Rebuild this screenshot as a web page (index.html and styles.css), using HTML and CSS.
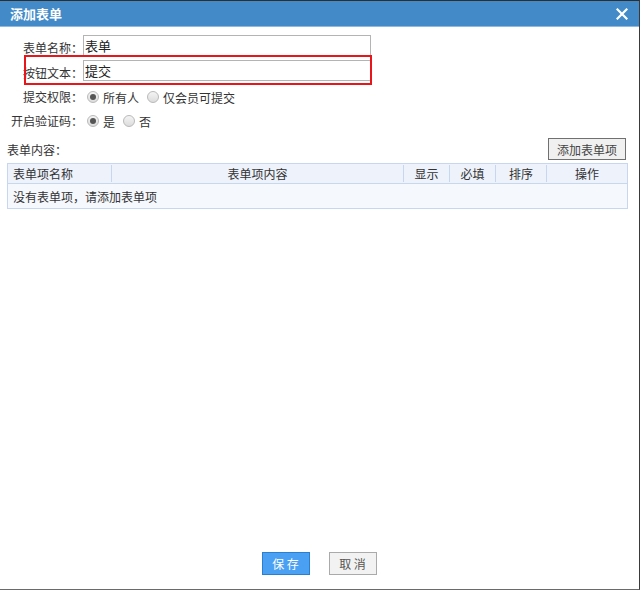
FILE: index.html
```html
<!DOCTYPE html>
<html lang="zh-CN">
<head>
<meta charset="utf-8">
<title>添加表单</title>
<link rel="stylesheet" href="styles.css">
</head>
<body>
<div class="dialog">
  <div class="titlebar">
    <span class="title">添加表单</span>
    <svg class="close" width="12" height="12" viewBox="0 0 12 12"><path d="M1.5 1.5 L10.5 10.5 M10.5 1.5 L1.5 10.5" stroke="#fff" stroke-width="2.2" stroke-linecap="square"/></svg>
  </div>
  <div class="body">
    <div class="form">
      <div class="row r1">
        <label class="lbl">表单名称<span class="colon">：</span></label>
        <input class="txt" type="text" value="表单">
      </div>
      <div class="row r2">
        <label class="lbl">按钮文本<span class="colon">：</span></label>
        <input class="txt" type="text" value="提交">
      </div>
      <div class="row r3">
        <label class="lbl">提交权限<span class="colon">：</span></label>
        <span class="radio on"></span><span class="opt">所有人</span>
        <span class="radio"></span><span class="opt">仅会员可提交</span>
      </div>
      <div class="row r4">
        <label class="lbl">开启验证码<span class="colon">：</span></label>
        <span class="radio on"></span><span class="opt">是</span>
        <span class="radio"></span><span class="opt">否</span>
      </div>
      <div class="highlight"></div>
    </div>
    <div class="section-head">
      <span class="section-title">表单内容<span class="colon">：</span></span>
      <button class="btn-add">添加表单项</button>
    </div>
    <div class="table">
      <div class="thead">
        <div class="c c-name">表单项名称</div>
        <div class="c c-content">表单项内容</div>
        <div class="c c-show">显示</div>
        <div class="c c-req">必填</div>
        <div class="c c-sort">排序</div>
        <div class="c c-op">操作</div>
      </div>
      <div class="empty">没有表单项<span class="colon">，</span>请添加表单项</div>
    </div>
    <div class="spacer"></div>
    <div class="footer">
      <button class="btn btn-save">保 存</button>
      <button class="btn btn-cancel">取 消</button>
    </div>
  </div>
</div>
</body>
</html>
```
FILE: styles.css
```css
* { box-sizing: border-box; }
html, body { margin: 0; padding: 0; background: #fff; }
body {
  font-family: "Noto Sans CJK SC", "Noto Sans", sans-serif;
  font-size: 12px;
  color: #333;
}
.colon { font-family: "Noto Sans CJK JP", "Noto Sans CJK SC", sans-serif; }
.dialog {
  width: 640px;
  height: 590px;
  border-top: 1px solid #2e2e2e;
  border-right: 1px solid #3a3a3a;
  border-bottom: 1px solid #6a6a6a;
  display: flex;
  flex-direction: column;
  background: #fff;
}
.titlebar {
  height: 26px;
  background: #428ac8;
  border-bottom: 1px solid #8fb9e0;
  display: flex;
  align-items: center;
  justify-content: space-between;
  padding: 0 11px 0 10px;
  flex-shrink: 0;
}
.title {
  color: #fff;
  font-weight: bold;
  font-size: 13px;
  line-height: 1;
}
.close { display: block; }
.body {
  flex: 1;
  display: flex;
  flex-direction: column;
  padding: 8px 12px 14px 7px;
}
.form {
  position: relative;
}
.row {
  display: flex;
  align-items: center;
}
.r1, .r2 { height: 25px; }
.r3, .r4 { height: 24px; }
.lbl {
  width: 76px;
  text-align: right;
  flex-shrink: 0;
  color: #333;
  line-height: 16px;
}
.r3 .lbl, .r4 .lbl { margin-right: 4px; }
.txt {
  width: 288px;
  height: 21px;
  border: 1px solid #b4b4b4;
  padding: 0 1px;
  font-family: "Noto Sans CJK SC", sans-serif;
  font-size: 13px;
  color: #222;
  background: #fff;
  outline: none;
}
.r1 .txt { margin-top: -5px; }
.r2 .txt { margin-top: -5px; }
.radio {
  width: 12px;
  height: 12px;
  border-radius: 50%;
  border: 1px solid #b9b9b9;
  background: linear-gradient(#f4f4f4, #dcdcdc);
  flex-shrink: 0;
  position: relative;
  margin-right: 4px;
}
.radio.on::after {
  content: "";
  position: absolute;
  left: 2px;
  top: 2px;
  width: 6px;
  height: 6px;
  border-radius: 50%;
  background: #555;
}
.opt {
  margin-right: 8px;
  color: #333;
}
.highlight {
  position: absolute;
  left: 17px;
  top: 20px;
  width: 348px;
  height: 30px;
  border: 2px solid #e8151b;
  pointer-events: none;
}
.section-head {
  display: flex;
  align-items: center;
  justify-content: space-between;
  height: 26px;
  margin-top: 3px;
  padding-right: 1px;
}
.section-title { color: #333; }
.btn-add {
  height: 22px;
  width: 78px;
  border: 1px solid #707070;
  background: #f0f0f0;
  font-family: "Noto Sans CJK SC", sans-serif;
  font-size: 12px;
  color: #444;
  padding: 0;
}
.table {
  margin-top: 1px;
  width: 621px;
  border: 1px solid #c6d7ef;
  background: #f5f8fd;
}
.thead {
  display: flex;
  height: 20px;
  background: #edf2fb;
  border-bottom: 1px solid #c6d7ef;
}
.c {
  display: flex;
  align-items: center;
  color: #333;
  border-left: 1px solid #c6d7ef;
  justify-content: center;
  margin: 1px 0;
}
.c-name { width: 103px; border-left: none; justify-content: flex-start; padding-left: 5px; }
.c-content { width: 292px; }
.c-show { width: 46px; }
.c-req { width: 46px; }
.c-sort { width: 51px; }
.c-op { flex: 1; }
.empty {
  height: 24px;
  display: flex;
  align-items: center;
  padding-left: 5px;
  color: #333;
}
.spacer { flex: 1; }
.footer {
  display: flex;
  justify-content: center;
  gap: 19px;
  margin-left: 4px;
}
.btn {
  width: 48px;
  height: 23px;
  font-family: "Noto Sans CJK SC", sans-serif;
  font-size: 12px;
  padding: 0;
}
.btn-save {
  background: #4aa0f2;
  border: 1px solid #2a7fd0;
  color: #fff;
}
.btn-cancel {
  background: #f2f2f2;
  border: 1px solid #aaaaaa;
  color: #555;
}
```
